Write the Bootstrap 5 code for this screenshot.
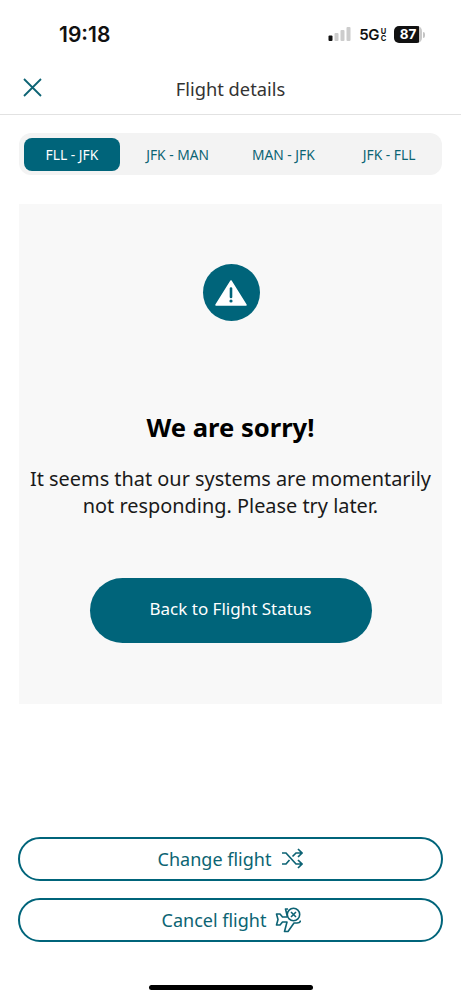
<!DOCTYPE html>
<html lang="en">
<head>
<meta charset="utf-8">
<meta name="viewport" content="width=device-width, initial-scale=1">
<link href="https://cdn.jsdelivr.net/npm/bootstrap@5.3.0/dist/css/bootstrap.min.css" rel="stylesheet">
<style>
body{font-family:"Noto Sans",sans-serif;background:#fff;color:#000;height:1000px;overflow:hidden}
.app-shell{width:461px;height:1000px}
.status-row{height:68px;padding:0 36px 0 59px}
.clock{font:600 21px "Inter",sans-serif;padding-top:23px;line-height:24px;color:#111}
.status-icons{padding-top:26px;gap:7px}
.net-label{font:600 15px "Inter",sans-serif;letter-spacing:-.5px;color:#111;line-height:17px;display:flex;align-items:center;gap:1px}
.net-sup{font-size:7.5px;line-height:7px;width:7px;text-align:center;font-weight:700;letter-spacing:0}
.batt-wrap{display:flex;align-items:center;gap:1px}
.batt{width:28px;height:17px;background:linear-gradient(90deg,#111 88%,#c9c9c9 88%);color:#fff;border-radius:5px;font:700 13.5px/17px "Inter",sans-serif;text-align:center}
.batt-nub{width:2px;height:6px;background:#c4c4c4;border-radius:0 2px 2px 0}
.head-row{height:47px;border-bottom:1px solid #e2e2e2;position:relative}
.head-title{font-size:18.3px;color:#333;line-height:42px;padding-bottom:5px}
.close-btn{position:absolute;left:23px;top:10px;width:19px;height:19px;display:block}
.seg-wrap{margin:18px 19px 0 19px;height:42px;background:#f3f3f3;border-radius:12px;padding:5px 0 4px}
.seg-item{flex:1 1 0;margin:0 4.5px;text-align:center;font-size:13.8px;color:#0b6473;line-height:33px;border-radius:8px;height:33px;white-space:nowrap}
.seg-item.on{background:#00647a;color:#fff}
.sorry-panel{margin:29px 19px 0 19px;height:500px;background:#f8f8f8;padding-top:60px}
.alert-disc{width:57px;height:57px;border-radius:50%;background:#00647a;margin-left:1px}
.sorry-title{font-size:25.6px;font-weight:700;line-height:34px;margin:90px 0 0;color:#000}
.sorry-text{font-size:19.9px;line-height:27px;margin:20px 0 0;color:#1a1a1a;white-space:nowrap}
.back-btn{width:282px;height:65px;border-radius:33px;background:#00647a;color:#fff;font-size:17px;border:0;margin-top:59px;padding-bottom:9px}
.foot-area{margin:133px 18px 0;gap:17px}
.foot-btn{height:44px;border:2px solid #00647a;border-radius:22px;background:#fff;color:#0b6473;font-size:18px;gap:10px}
.foot-btn.nudge{gap:9px;padding-left:14px}
.home-bar{position:absolute;left:149px;top:985px;width:164px;height:5px;border-radius:3px;background:#000}
</style>
</head>
<body>
<div class="app-shell position-relative">
  <div class="status-row d-flex justify-content-between">
    <div class="clock">19:18</div>
    <div class="status-icons d-flex align-items-start">
      <svg width="24" height="16" viewBox="0 0 24 16"><rect x="0.5" y="9.5" width="4" height="5.5" rx="1" fill="#111"/><rect x="6.5" y="7" width="4" height="8" rx="1" fill="#ccc"/><rect x="12.5" y="4" width="4" height="11" rx="1" fill="#ccc"/><rect x="18.5" y="1" width="4" height="14" rx="1" fill="#ccc"/></svg>
      <span class="net-label">5G<span class="net-sup">U<br>C</span></span>
      <span class="batt-wrap"><span class="batt">87</span><span class="batt-nub"></span></span>
    </div>
  </div>
  <div class="head-row text-center">
    <svg class="close-btn" viewBox="0 0 19 19"><path d="M1 1L18 18M18 1L1 18" stroke="#0d6374" stroke-width="1.8" fill="none"/></svg>
    <div class="head-title">Flight details</div>
  </div>
  <div class="seg-wrap d-flex">
    <div class="seg-item on">FLL - JFK</div>
    <div class="seg-item">JFK - MAN</div>
    <div class="seg-item">MAN - JFK</div>
    <div class="seg-item">JFK - FLL</div>
  </div>
  <div class="sorry-panel text-center d-flex flex-column align-items-center">
    <div class="alert-disc d-flex align-items-center justify-content-center">
      <svg width="36" height="36" viewBox="0 0 36 36"><path d="M18 6L33 30H3Z" fill="#fff" stroke="#fff" stroke-width="1.5" stroke-linejoin="round"/><path d="M18 13.5v8.5" stroke="#00647a" stroke-width="2.6" stroke-linecap="round"/><circle cx="18" cy="26" r="1.6" fill="#00647a"/></svg>
    </div>
    <h1 class="sorry-title">We are sorry!</h1>
    <p class="sorry-text">It seems that our systems are momentarily<br>not responding. Please try later.</p>
    <button class="btn back-btn" type="button">Back to Flight Status</button>
  </div>
  <div class="foot-area d-flex flex-column">
    <button class="btn foot-btn d-flex align-items-center justify-content-center" type="button">Change flight
      <svg width="22" height="22" viewBox="0 0 22 22" fill="none" stroke="#0d6374" stroke-width="1.7"><path d="M1 5h4l10 11h6M1 16h4l3.5-4M11.5 8.5L15 5h6M17 1l4 4-4 4M17 12l4 4-4 4"/></svg>
    </button>
    <button class="btn foot-btn nudge d-flex align-items-center justify-content-center" type="button">Cancel flight
      <svg width="26" height="26" viewBox="0 0 26 26" fill="none" stroke="#0d6374" stroke-width="1.6" stroke-linejoin="round"><circle cx="18.5" cy="7.5" r="6.2"/><path d="M16 5l5 5M21 5l-5 5"/><path d="M12.5 10H7.5L5 7H1.5l1.5 5.5L1.5 18H5l2.5-3H12l-2.5 9.5H13l6-8.5h3c2 0 3.500-1 3.500-2.500"/><path d="M12.500 10L10.500 2H13"/></svg>
    </button>
  </div>
  <div class="home-bar"></div>
</div>
<script src="https://cdn.jsdelivr.net/npm/bootstrap@5.3.0/dist/js/bootstrap.bundle.min.js"></script>
</body>
</html>
